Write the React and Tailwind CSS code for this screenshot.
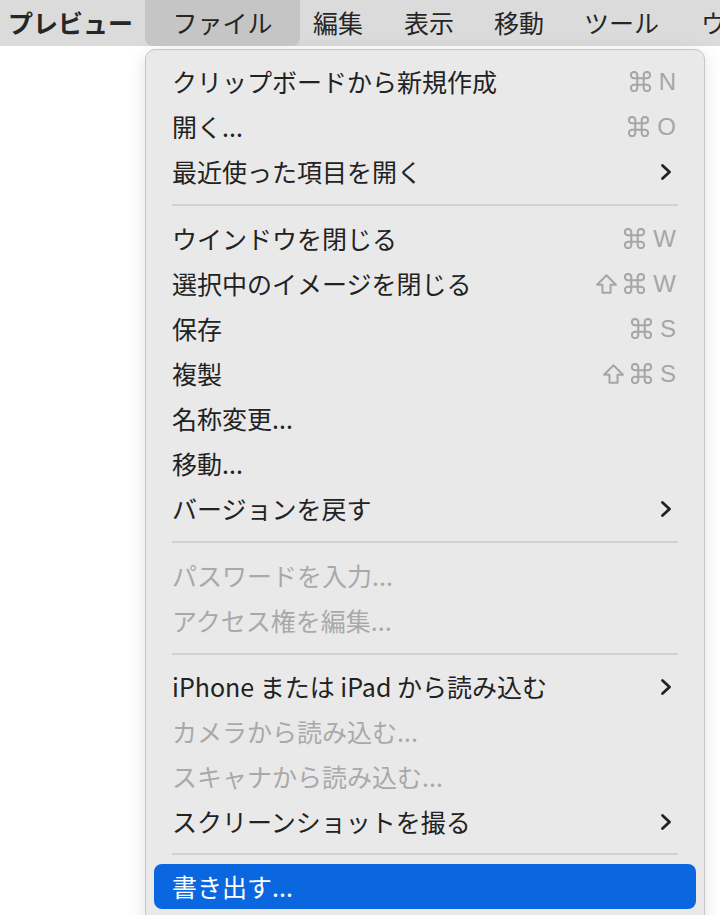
import React from "react";

const jp = { fontFamily: '"Noto Sans CJK JP", "Noto Sans", sans-serif' };
const lat = { fontFamily: '"Liberation Sans", Arial, sans-serif' };

const items = [
    { t: "クリップボードから新規作成", k: ["cmd", "N"] },
    { t: "開く...", k: ["cmd", "O"] },
    { t: "最近使った項目を開く", sub: true },
    { sep: 22 },
    { t: "ウインドウを閉じる", k: ["cmd", "W"] },
    { t: "選択中のイメージを閉じる", k: ["shift", "cmd", "W"] },
    { t: "保存", k: ["cmd", "S"] },
    { t: "複製", k: ["shift", "cmd", "S"] },
    { t: "名称変更..." },
    { t: "移動..." },
    { t: "バージョンを戻す", sub: true },
    { sep: 22 },
    { t: "パスワードを入力...", dis: true },
    { t: "アクセス権を編集...", dis: true },
    { sep: 21 },
    { t: "iPhone または iPad から読み込む", sub: true },
    { t: "カメラから読み込む...", dis: true },
    { t: "スキャナから読み込む...", dis: true },
    { t: "スクリーンショットを撮る", sub: true },
    { sep: 20 },
    { t: "書き出す...", active: true },
];

function Chevron() {
    return (
        <svg width="12" height="18" viewBox="0 0 12 18" className="text-[#222]">
            <polyline points="2.5,2.5 9.5,9 2.5,15.5" fill="none" stroke="currentColor" strokeWidth="2.8" strokeLinecap="round" strokeLinejoin="round" />
        </svg>
    );
}

function CmdIcon() {
    return (
        <svg width="21" height="21" viewBox="2.2 2.2 19.6 19.6" fill="none" stroke="currentColor" strokeWidth="1.9">
            <path d="M15 6v12a3 3 0 1 0 3-3H6a3 3 0 1 0 3 3V6a3 3 0 1 0-3 3h12a3 3 0 1 0-3-3" />
        </svg>
    );
}

function ShiftIcon() {
    return (
        <svg width="21" height="20" viewBox="4.2 4.2 15.6 14.6" fill="none" stroke="currentColor" strokeWidth="1.5" strokeLinejoin="round">
            <path d="M9 18v-6H5l7-7 7 7h-4v6H9z" />
        </svg>
    );
}

function Shortcut({ keys }) {
    return (
        <div className="flex items-center gap-[7px] text-[#a6a6a6]">
            {keys.map((k, i) =>
                k === "cmd" ? (
                    <CmdIcon key={i} />
                ) : k === "shift" ? (
                    <ShiftIcon key={i} />
                ) : (
                    <span key={i} className="ml-[1px] text-[24px] leading-none" style={lat}>{k}</span>
                )
            )}
        </div>
    );
}

function MenuRow({ item }) {
    if (item.sep) {
        return (
            <div className="flex items-center px-[18px]" style={{ height: item.sep }}>
                <div className="h-[2px] w-full bg-[#d1d1d1]" />
            </div>
        );
    }
    const color = item.active ? "text-white" : item.dis ? "text-[#a9a9a9]" : "text-[#222]";
    return (
        <div className={`h-[45px] flex items-center justify-between pl-[18px] pr-[20px] rounded-[8px] ${item.active ? "bg-[#0a67df]" : ""}`}>
            <span className={`text-[25px] leading-none whitespace-nowrap ${color}`} style={jp}>{item.t}</span>
            {item.k && <Shortcut keys={item.k} />}
            {item.sub && (
                <span className="pr-[4px]">
                    <Chevron />
                </span>
            )}
        </div>
    );
}

export default function App() {
    return (
        <div className="w-[720px] h-[915px] overflow-hidden bg-white" style={jp}>
            {/* Menu bar */}
            <div className="h-[46px] bg-[#dbdbdb] flex items-center text-[25px] text-[#262626] whitespace-nowrap overflow-hidden">
                <span className="shrink-0 ml-[8px] font-bold">プレビュー</span>
                <span className="shrink-0 ml-[12px] h-[46px] w-[155px] flex items-center justify-center bg-[#c5c5c5] rounded-b-[8px]">ファイル</span>
                <span className="shrink-0 ml-[13px]">編集</span>
                <span className="shrink-0 ml-[41px]">表示</span>
                <span className="shrink-0 ml-[40px]">移動</span>
                <span className="shrink-0 ml-[40px]">ツール</span>
                <span className="shrink-0 ml-[42px]">ウインドウ</span>
            </div>

            {/* File menu */}
            <div className="ml-[145px] mt-[3px] w-[560px] h-[900px] bg-[#e9e9e9] border border-[#c6c6c6] rounded-t-[10px] pt-[9px] px-[8px] shadow-[0_4px_18px_rgba(0,0,0,0.12)]">
                {items.map((item, i) => (
                    <MenuRow key={i} item={item} />
                ))}
            </div>
        </div>
    );
}
